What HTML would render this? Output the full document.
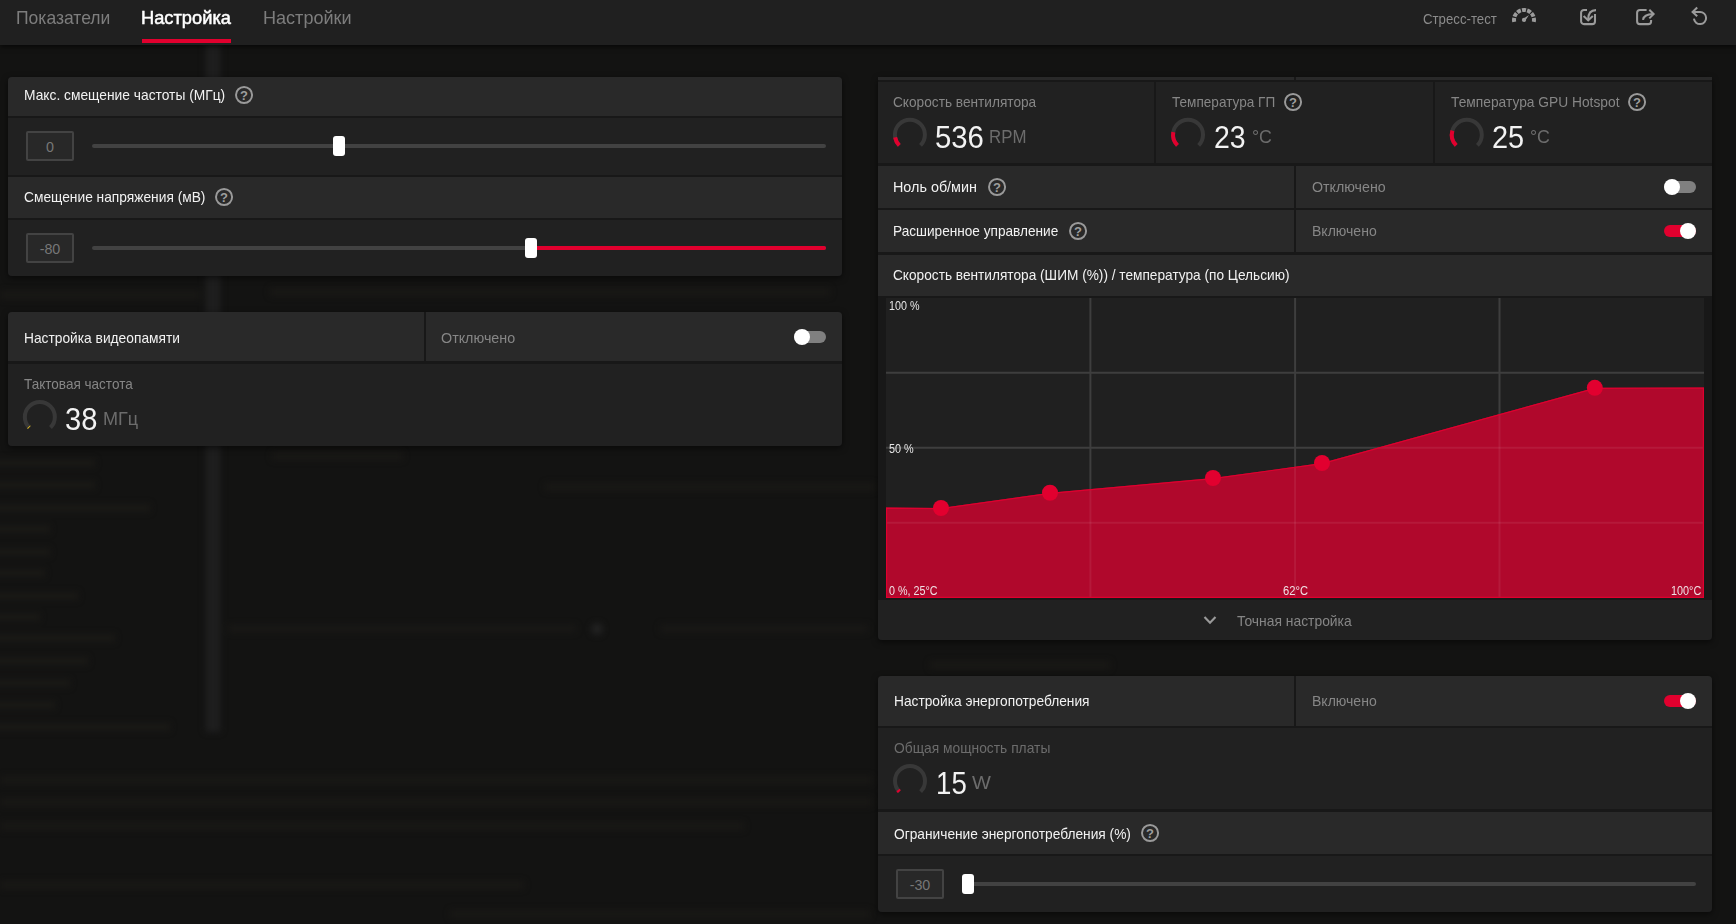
<!DOCTYPE html><html lang="ru"><head><meta charset="utf-8"><title>Настройка</title><style>
html,body{margin:0;padding:0;background:#121212;overflow:hidden}body{width:1736px;height:924px;position:relative;font-family:"Liberation Sans",sans-serif}#r div,#r .a,#r span{position:absolute}#r span{white-space:nowrap;transform-origin:0 0;line-height:1}.panel{border-radius:4px;box-shadow:0 2px 6px rgba(0,0,0,.55)}
</style></head><body><div id="r">
<div style="left:0;top:45px;width:1736px;height:879px;background:#131312"></div>
<svg class="a" style="left:0;top:0" width="1736" height="924"><defs><filter id="bl" color-interpolation-filters="sRGB" x="-5%" y="-5%" width="110%" height="110%"><feGaussianBlur stdDeviation="3.4"/></filter></defs><g filter="url(#bl)" fill="#1a1916"><rect x="-6" y="459" width="101" height="8"/><rect x="-6" y="481" width="101" height="8"/><rect x="-6" y="504" width="156" height="8"/><rect x="-6" y="525" width="56" height="8"/><rect x="-6" y="548" width="56" height="8"/><rect x="-6" y="569" width="51" height="8"/><rect x="-6" y="592" width="84" height="8"/><rect x="-6" y="613" width="46" height="8"/><rect x="-6" y="634" width="121" height="8"/><rect x="-6" y="657" width="94" height="8"/><rect x="-6" y="679" width="76" height="8"/><rect x="-6" y="701" width="61" height="8"/><rect x="-6" y="723" width="176" height="8"/><rect x="228" y="624.6" width="348" height="8" fill-opacity=".8"/><rect x="660" y="624.6" width="208" height="8" fill-opacity=".8"/><rect x="272" y="452" width="131" height="8" fill-opacity=".8"/><rect x="545" y="483" width="330" height="8" fill-opacity=".8"/><rect x="0" y="776" width="872" height="8" fill-opacity=".8"/><rect x="0" y="798" width="872" height="8" fill-opacity=".8"/><rect x="0" y="822" width="744" height="8" fill-opacity=".8"/><rect x="0" y="881" width="524" height="8" fill-opacity=".8"/><rect x="450" y="910" width="420" height="8" fill-opacity=".8"/><rect x="930" y="661" width="180" height="8" fill-opacity=".8"/><rect x="0" y="291" width="200" height="8" fill-opacity=".8"/><rect x="270" y="288" width="560" height="8" fill-opacity=".8"/><circle cx="597" cy="629" r="6" fill="#222"/><rect x="205.5" y="40" width="15" height="692" fill="#1e1e1e"/></g></svg>
<div style="left:0;top:0;width:1736px;height:45px;background:#202020;box-shadow:0 2px 5px rgba(0,0,0,.6)"></div>
<div style="left:142px;top:39px;width:89px;height:4px;background:#e1002e;"></div>
<div class="panel" style="left:8px;top:77px;width:834px;height:199px;background:#181818"></div>
<div style="left:8px;top:77px;width:834px;height:39px;background:#292929;border-radius:4px 4px 0 0"></div>
<div style="left:8px;top:118px;width:834px;height:56.5px;background:#212121;"></div>
<div style="left:8px;top:176.5px;width:834px;height:41.5px;background:#292929;"></div>
<div style="left:8px;top:220px;width:834px;height:56px;background:#212121;border-radius:0 0 4px 4px"></div>
<div style="left:26px;top:131px;width:44px;height:26px;background:#282828;border:2px solid #434343;border-radius:2px"></div>
<div style="left:26px;top:233px;width:44px;height:26px;background:#282828;border:2px solid #434343;border-radius:2px"></div>
<div style="left:92px;top:144px;width:734px;height:4px;border-radius:2px;background:#424242"></div><div style="left:332.7px;top:136px;width:12px;height:20px;border-radius:3px;background:#fff"></div>
<div style="left:92px;top:246px;width:734px;height:4px;border-radius:2px;background:#424242"></div><div style="left:531px;top:246px;width:295px;height:4px;border-radius:2px;background:#e1002e"></div><div style="left:525.2px;top:238px;width:12px;height:20px;border-radius:3px;background:#fff"></div>
<svg class="a" style="left:234px;top:85px" width="20" height="20" viewBox="0 0 20 20"><circle cx="10.05" cy="10" r="8.05" fill="none" stroke="#9a9a9a" stroke-width="1.95"/><text x="10.1" y="14.9" text-anchor="middle" font-family="Liberation Sans, sans-serif" font-weight="700" font-size="13" fill="#9e9e9e">?</text></svg>
<svg class="a" style="left:214px;top:187px" width="20" height="20" viewBox="0 0 20 20"><circle cx="10.05" cy="10" r="8.05" fill="none" stroke="#9a9a9a" stroke-width="1.95"/><text x="10.1" y="14.9" text-anchor="middle" font-family="Liberation Sans, sans-serif" font-weight="700" font-size="13" fill="#9e9e9e">?</text></svg>
<div class="panel" style="left:8px;top:312px;width:834px;height:134px;background:#181818"></div>
<div style="left:8px;top:312px;width:416px;height:49.25px;background:#292929;border-radius:4px 0 0 0"></div>
<div style="left:426px;top:312px;width:416px;height:49.25px;background:#292929;border-radius:0 4px 0 0"></div>
<div style="left:8px;top:363.5px;width:834px;height:82.5px;background:#212121;border-radius:0 0 4px 4px"></div>
<div style="left:794px;top:331px;width:32px;height:12px;border-radius:6px;background:#808080"></div><div style="left:793.8px;top:328.8px;width:16.4px;height:16.4px;border-radius:50%;background:#fff"></div>
<svg class="a" style="left:0;top:0" width="1736" height="924"><path d="M29.24 427.51 A15 15 0 1 1 50.46 427.51" fill="none" stroke="#383838" stroke-width="4"/><path d="M29.24 427.51 A15 15 0 0 1 28.66 426.89" fill="none" stroke="#e8c020" stroke-width="4"/></svg>
<div class="panel" style="left:878px;top:77px;width:834px;height:563px;background:#181818"></div>
<div style="left:878px;top:77px;width:416px;height:3px;background:#292929;"></div>
<div style="left:1296px;top:77px;width:416px;height:3px;background:#292929;"></div>
<div style="left:878px;top:82px;width:276px;height:81.25px;background:#212121;"></div>
<div style="left:1156px;top:82px;width:277px;height:81.25px;background:#212121;"></div>
<div style="left:1435px;top:82px;width:277px;height:81.25px;background:#212121;"></div>
<div style="left:878px;top:166px;width:416px;height:42px;background:#292929;"></div>
<div style="left:1296px;top:166px;width:416px;height:42px;background:#292929;"></div>
<div style="left:878px;top:210px;width:416px;height:42px;background:#292929;"></div>
<div style="left:1296px;top:210px;width:416px;height:42px;background:#292929;"></div>
<div style="left:878px;top:254.5px;width:834px;height:41.5px;background:#292929;"></div>
<div style="left:878px;top:600px;width:834px;height:40px;background:#212121;border-radius:0 0 4px 4px"></div>
<svg class="a" style="left:0;top:0" width="1736" height="924"><path d="M899.29 145.41 A15 15 0 1 1 920.51 145.41" fill="none" stroke="#383838" stroke-width="4"/><path d="M899.29 145.41 A15 15 0 0 1 895.12 137.38" fill="none" stroke="#e1002e" stroke-width="4"/></svg>
<svg class="a" style="left:0;top:0" width="1736" height="924"><path d="M1177.44 145.41 A15 15 0 1 1 1198.66 145.41" fill="none" stroke="#383838" stroke-width="4"/><path d="M1177.44 145.41 A15 15 0 0 1 1173.28 132.17" fill="none" stroke="#e1002e" stroke-width="4"/></svg>
<svg class="a" style="left:0;top:0" width="1736" height="924"><path d="M1456.19 145.46 A15 15 0 1 1 1477.41 145.46" fill="none" stroke="#383838" stroke-width="4"/><path d="M1456.19 145.46 A15 15 0 0 1 1452.40 130.64" fill="none" stroke="#e1002e" stroke-width="4"/></svg>
<svg class="a" style="left:1283px;top:92px" width="20" height="20" viewBox="0 0 20 20"><circle cx="10.05" cy="10" r="8.05" fill="none" stroke="#9a9a9a" stroke-width="1.95"/><text x="10.1" y="14.9" text-anchor="middle" font-family="Liberation Sans, sans-serif" font-weight="700" font-size="13" fill="#9e9e9e">?</text></svg>
<svg class="a" style="left:1627px;top:92px" width="20" height="20" viewBox="0 0 20 20"><circle cx="10.05" cy="10" r="8.05" fill="none" stroke="#9a9a9a" stroke-width="1.95"/><text x="10.1" y="14.9" text-anchor="middle" font-family="Liberation Sans, sans-serif" font-weight="700" font-size="13" fill="#9e9e9e">?</text></svg>
<svg class="a" style="left:987px;top:177px" width="20" height="20" viewBox="0 0 20 20"><circle cx="10.05" cy="10" r="8.05" fill="none" stroke="#9a9a9a" stroke-width="1.95"/><text x="10.1" y="14.9" text-anchor="middle" font-family="Liberation Sans, sans-serif" font-weight="700" font-size="13" fill="#9e9e9e">?</text></svg>
<svg class="a" style="left:1068px;top:221px" width="20" height="20" viewBox="0 0 20 20"><circle cx="10.05" cy="10" r="8.05" fill="none" stroke="#9a9a9a" stroke-width="1.95"/><text x="10.1" y="14.9" text-anchor="middle" font-family="Liberation Sans, sans-serif" font-weight="700" font-size="13" fill="#9e9e9e">?</text></svg>
<div style="left:1664px;top:181px;width:32px;height:12px;border-radius:6px;background:#808080"></div><div style="left:1663.8px;top:178.8px;width:16.4px;height:16.4px;border-radius:50%;background:#fff"></div>
<div style="left:1664px;top:225px;width:32px;height:12px;border-radius:6px;background:#e1002e"></div><div style="left:1679.8px;top:222.8px;width:16.4px;height:16.4px;border-radius:50%;background:#fff"></div>
<svg class="a" style="left:0;top:0" width="1736" height="924"><rect x="886" y="298" width="818" height="300" fill="#202020"/><rect x="1089.4" y="298" width="2" height="300" fill="#3e3e3e"/><rect x="1294.1" y="298" width="2" height="300" fill="#3e3e3e"/><rect x="1498.5" y="298" width="2" height="300" fill="#3e3e3e"/><rect x="886" y="371.75" width="818" height="2" fill="#3e3e3e"/><rect x="886" y="446.75" width="818" height="2" fill="#3e3e3e"/><rect x="886" y="521.75" width="818" height="2" fill="#3e3e3e"/><clipPath id="fc"><polygon points="886,507.5 941,508 1050,492.75 1213,478 1322,463 1594.8,387.8 1704,387.4 1704,598 886,598"/></clipPath><polygon points="886,507.5 941,508 1050,492.75 1213,478 1322,463 1594.8,387.8 1704,387.4 1704,598 886,598" fill="#b0082c"/><g clip-path="url(#fc)"><rect x="1089.4" y="298" width="2" height="300" fill="#fff" fill-opacity=".07"/><rect x="1294.1" y="298" width="2" height="300" fill="#fff" fill-opacity=".07"/><rect x="1498.5" y="298" width="2" height="300" fill="#fff" fill-opacity=".07"/><rect x="886" y="371.75" width="818" height="2" fill="#fff" fill-opacity=".07"/><rect x="886" y="446.75" width="818" height="2" fill="#fff" fill-opacity=".07"/><rect x="886" y="521.75" width="818" height="2" fill="#fff" fill-opacity=".07"/><polygon points="886,507.5 941,508 1050,492.75 1213,478 1322,463 1594.8,387.8 1704,387.4 1704,598 886,598" fill="none" stroke="#de002f" stroke-width="2.4"/></g><circle cx="941" cy="508" r="8" fill="#e2002f"/><circle cx="1050" cy="492.75" r="8" fill="#e2002f"/><circle cx="1213" cy="478" r="8" fill="#e2002f"/><circle cx="1322" cy="463" r="8" fill="#e2002f"/><circle cx="1594.8" cy="387.8" r="8" fill="#e2002f"/><path d="M1204.5 617 L1210 622.8 L1215.5 617" fill="none" stroke="#9a9a9a" stroke-width="2.1"/></svg>
<div class="panel" style="left:878px;top:676px;width:834px;height:236px;background:#181818"></div>
<div style="left:878px;top:676px;width:416px;height:49.700000000000045px;background:#292929;border-radius:4px 0 0 0"></div>
<div style="left:1296px;top:676px;width:416px;height:49.700000000000045px;background:#292929;border-radius:0 4px 0 0"></div>
<div style="left:878px;top:728px;width:834px;height:81px;background:#212121;"></div>
<div style="left:878px;top:812px;width:834px;height:41.700000000000045px;background:#292929;"></div>
<div style="left:878px;top:855.5px;width:834px;height:56.5px;background:#212121;border-radius:0 0 4px 4px"></div>
<div style="left:1664px;top:695px;width:32px;height:12px;border-radius:6px;background:#e1002e"></div><div style="left:1679.8px;top:692.8px;width:16.4px;height:16.4px;border-radius:50%;background:#fff"></div>
<svg class="a" style="left:0;top:0" width="1736" height="924"><path d="M899.39 791.61 A15 15 0 1 1 920.61 791.61" fill="none" stroke="#383838" stroke-width="4"/><path d="M899.39 791.61 A15 15 0 0 1 898.00 790.01" fill="none" stroke="#e1002e" stroke-width="4"/></svg>
<svg class="a" style="left:1140px;top:823px" width="20" height="20" viewBox="0 0 20 20"><circle cx="10.05" cy="10" r="8.05" fill="none" stroke="#9a9a9a" stroke-width="1.95"/><text x="10.1" y="14.9" text-anchor="middle" font-family="Liberation Sans, sans-serif" font-weight="700" font-size="13" fill="#9e9e9e">?</text></svg>
<div style="left:896px;top:869px;width:44px;height:26px;background:#282828;border:2px solid #434343;border-radius:2px"></div>
<div style="left:962px;top:882px;width:734px;height:4px;border-radius:2px;background:#424242"></div><div style="left:962px;top:874px;width:12px;height:20px;border-radius:3px;background:#fff"></div>
<svg class="a" style="left:0;top:0" width="1736" height="45"><path d="M1514.20 17.91 A10 10 0 0 0 1514.20 21.89" fill="none" stroke="#9b9b9b" stroke-width="4"/><path d="M1516.51 13.27 A10 10 0 0 0 1514.52 16.73" fill="none" stroke="#9b9b9b" stroke-width="4"/><path d="M1520.83 10.42 A10 10 0 0 0 1517.37 12.41" fill="none" stroke="#9b9b9b" stroke-width="4"/><path d="M1525.99 10.10 A10 10 0 0 0 1522.01 10.10" fill="none" stroke="#9b9b9b" stroke-width="4"/><path d="M1530.63 12.41 A10 10 0 0 0 1527.17 10.42" fill="none" stroke="#9b9b9b" stroke-width="4"/><path d="M1533.48 16.73 A10 10 0 0 0 1531.49 13.27" fill="none" stroke="#9b9b9b" stroke-width="4"/><path d="M1533.80 21.89 A10 10 0 0 0 1533.80 17.91" fill="none" stroke="#9b9b9b" stroke-width="4"/><circle cx="1524.0" cy="19.9" r="2.1" fill="#9b9b9b"/><path d="M1523.1 18.7 L1529 15 L1525.2 20.799999999999997 Z" fill="#9b9b9b"/><path d="M1587 9.9 H1584 A2.9 2.9 0 0 0 1581.1 12.8 V21.2 A2.9 2.9 0 0 0 1584 24.1 H1592.1 A2.9 2.9 0 0 0 1595 21.2 V14.1" fill="none" stroke="#9b9b9b" stroke-width="2.05"/><path d="M1596 10.1 C1591.5 10.1 1588.2 13 1588.2 19.4" fill="none" stroke="#9b9b9b" stroke-width="2.05"/><path d="M1583.6 15.9 L1588.2 20.4 L1592.8 15.9" fill="none" stroke="#9b9b9b" stroke-width="2.05"/><path d="M1646.6 9.9 H1640 A2.9 2.9 0 0 0 1637.1 12.8 V21.2 A2.9 2.9 0 0 0 1640 24.1 H1648.2 A2.9 2.9 0 0 0 1651.1 21.2 V19.9" fill="none" stroke="#9b9b9b" stroke-width="2.05"/><path d="M1643 19.8 C1643.6 16 1647 14.1 1653 14.1" fill="none" stroke="#9b9b9b" stroke-width="2.05"/><path d="M1649.3 9.8 L1653.6 14.1 L1649.3 18.4" fill="none" stroke="#9b9b9b" stroke-width="2.05"/><path d="M1692.6 11.9 H1700 A6.1 6.1 0 1 1 1693.93 18.64" fill="none" stroke="#9b9b9b" stroke-width="2"/><path d="M1697.2 7.6 L1692.6 11.95 L1697.2 16.3" fill="none" stroke="#9b9b9b" stroke-width="2.05"/></svg>
<span style="left:16.16px;top:9.02px;font-size:18.2px;color:#7d7d7d;font-weight:400;transform:scaleX(0.9639)">Показатели</span>
<span style="left:141.16px;top:9.02px;font-size:18.2px;color:#ffffff;font-weight:401;-webkit-text-stroke:.5px #fff;transform:scaleX(1.0049)">Настройка</span>
<span style="left:263.06px;top:9.02px;font-size:18.2px;color:#7d7d7d;font-weight:400;transform:scaleX(0.9932)">Настройки</span>
<span style="left:1422.69px;top:11.60px;font-size:14.3px;color:#8b8b8b;font-weight:400;transform:scaleX(0.9241)">Стресс-тест</span>
<span style="left:23.74px;top:88.00px;font-size:14.3px;color:#f2f2f2;font-weight:400;transform:scaleX(0.9648)">Макс. смещение частоты (МГц)</span>
<span style="left:23.74px;top:190.00px;font-size:14.3px;color:#f2f2f2;font-weight:400;transform:scaleX(0.9622)">Смещение напряжения (мВ)</span>
<span style="left:23.74px;top:330.50px;font-size:14.3px;color:#f2f2f2;font-weight:400;transform:scaleX(0.9628)">Настройка видеопамяти</span>
<span style="left:441.49px;top:330.50px;font-size:14.3px;color:#868686;font-weight:400;transform:scaleX(1.0016)">Отключено</span>
<span style="left:23.74px;top:377.25px;font-size:14.3px;color:#868686;font-weight:400;transform:scaleX(0.9469)">Тактовая частота</span>
<span style="left:65.10px;top:404.81px;font-size:30.8px;color:#f2f2f2;font-weight:400;transform:scaleX(0.9454)">38</span>
<span style="left:103.36px;top:409.82px;font-size:18.2px;color:#6c6c6c;font-weight:400;transform:scaleX(0.9933)">МГц</span>
<span style="left:893.49px;top:95.00px;font-size:14.3px;color:#868686;font-weight:400;transform:scaleX(0.9557)">Скорость вентилятора</span>
<span style="left:935.25px;top:122.81px;font-size:30.8px;color:#f2f2f2;font-weight:400;transform:scaleX(0.9524)">536</span>
<span style="left:989.01px;top:127.82px;font-size:18.2px;color:#6c6c6c;font-weight:400;transform:scaleX(0.9261)">RPM</span>
<span style="left:1172.49px;top:95.00px;font-size:14.3px;color:#868686;font-weight:400;transform:scaleX(0.9505)">Температура ГП</span>
<span style="left:1213.50px;top:122.81px;font-size:30.8px;color:#f2f2f2;font-weight:400;transform:scaleX(0.9250)">23</span>
<span style="left:1251.51px;top:127.71px;font-size:18.2px;color:#6c6c6c;font-weight:400;transform:scaleX(0.9761)">°C</span>
<span style="left:1450.99px;top:95.00px;font-size:14.3px;color:#868686;font-weight:400;transform:scaleX(0.9638)">Температура GPU Hotspot</span>
<span style="left:1492.10px;top:122.81px;font-size:30.8px;color:#f2f2f2;font-weight:400;transform:scaleX(0.9396)">25</span>
<span style="left:1530.16px;top:127.71px;font-size:18.2px;color:#6c6c6c;font-weight:400;transform:scaleX(0.9786)">°C</span>
<span style="left:893.49px;top:179.75px;font-size:14.3px;color:#f2f2f2;font-weight:400;transform:scaleX(1.0048)">Ноль об/мин</span>
<span style="left:1311.99px;top:179.75px;font-size:14.3px;color:#868686;font-weight:400;transform:scaleX(0.9949)">Отключено</span>
<span style="left:893.49px;top:224.25px;font-size:14.3px;color:#f2f2f2;font-weight:400;transform:scaleX(0.9529)">Расширенное управление</span>
<span style="left:1311.99px;top:224.25px;font-size:14.3px;color:#868686;font-weight:400;transform:scaleX(0.9812)">Включено</span>
<span style="left:893.49px;top:268.00px;font-size:14.3px;color:#f2f2f2;font-weight:400;transform:scaleX(0.9561)">Скорость вентилятора (ШИМ (%)) / температура (по Цельсию)</span>
<span style="left:889.38px;top:300.01px;font-size:12.0px;color:#e6e6e6;font-weight:400;transform:scaleX(0.8945)">100 %</span>
<span style="left:888.88px;top:443.26px;font-size:12.0px;color:#e6e6e6;font-weight:400;transform:scaleX(0.9024)">50 %</span>
<span style="left:888.88px;top:585.01px;font-size:12.0px;color:#f0e0e4;font-weight:400;transform:scaleX(0.8942)">0 %, 25°C</span>
<span style="left:1282.63px;top:585.01px;font-size:12.0px;color:#f0e0e4;font-weight:400;transform:scaleX(0.9302)">62°C</span>
<span style="left:1671.33px;top:585.01px;font-size:12.0px;color:#f0e0e4;font-weight:400;transform:scaleX(0.9027)">100°C</span>
<span style="left:1237.49px;top:614.00px;font-size:14.3px;color:#868686;font-weight:400;transform:scaleX(0.9704)">Точная настройка</span>
<span style="left:893.79px;top:694.31px;font-size:14.3px;color:#f2f2f2;font-weight:400;transform:scaleX(0.9611)">Настройка энергопотребления</span>
<span style="left:1311.99px;top:694.31px;font-size:14.3px;color:#868686;font-weight:400;transform:scaleX(0.9812)">Включено</span>
<span style="left:893.79px;top:741.40px;font-size:14.3px;color:#6c6c6c;font-weight:400;transform:scaleX(0.9661)">Общая мощность платы</span>
<span style="left:936.40px;top:769.01px;font-size:30.8px;color:#f2f2f2;font-weight:400;transform:scaleX(0.8987)">15</span>
<span style="left:972.06px;top:774.02px;font-size:18.2px;color:#6c6c6c;font-weight:400;transform:scaleX(1.0997)">W</span>
<span style="left:893.79px;top:826.60px;font-size:14.3px;color:#f2f2f2;font-weight:400;transform:scaleX(0.9607)">Ограничение энергопотребления (%)</span>
<span style="left:26px;width:48px;text-align:center;top:139.70px;font-size:14.3px;color:#777">0</span>
<span style="left:26px;width:48px;text-align:center;top:241.70px;font-size:14.3px;color:#777">-80</span>
<span style="left:896px;width:48px;text-align:center;top:877.70px;font-size:14.3px;color:#777">-30</span>
</div></body></html>
